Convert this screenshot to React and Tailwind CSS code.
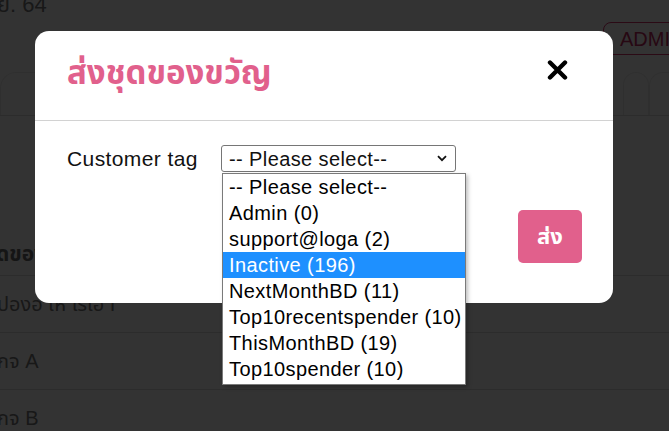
import React from 'react'

const tags = [
  '-- Please select--',
  'Admin (0)',
  'support@loga (2)',
  'Inactive (196)',
  'NextMonthBD (11)',
  'Top10recentspender (10)',
  'ThisMonthBD (19)',
  'Top10spender (10)',
]

function Chevron(){
  return (
    <svg width="10" height="7" viewBox="0 0 10 7" className="shrink-0">
      <polyline points="1,1.2 5,5.2 9,1.2" fill="none" stroke="#111" strokeWidth="1.8" />
    </svg>
  )
}

function CloseIcon(){
  return (
    <svg width="21" height="20" viewBox="0 0 21 20">
      <path d="M3 2.5 L18 17.5 M18 2.5 L3 17.5" stroke="#000" strokeWidth="4.4" strokeLinecap="round" />
    </svg>
  )
}

function BackPage(){
  return (
    <div className="w-[669px] h-[431px] bg-white text-[#777] overflow-hidden">
      <div className="h-[16px] overflow-hidden">
        <div className="-mt-[8px] -ml-[3px] text-[22px] leading-[26px]">ย. 64</div>
      </div>
      <div className="flex mt-[6px] h-[33px]">
        <div className="w-[603px] shrink-0"></div>
        <div className="shrink-0 h-[33px] border border-[#d6336c] rounded-[8px] px-[16px] flex items-center text-[20px] text-[#c22a5f]">ADMIN</div>
      </div>
      <div className="mt-[17px] h-[44px] flex border-b border-[#dcdcdc]">
        <div className="w-[36px] border-l border-t border-[#ececec] rounded-tl-[16px]"></div>
        <div className="flex-1 flex justify-end items-center pr-[46px] text-[20px]">ชื่อ</div>
        <div className="w-[26px] border border-b-0 border-[#ececec] rounded-t-[14px]"></div>
        <div className="w-[20px] border-l border-t border-[#ececec] rounded-tl-[14px]"></div>
      </div>
      <div className="h-[116px]"></div>
      <div className="h-[44px] flex items-center border-b border-[#dcdcdc] -ml-[4px] text-[21px] font-bold text-[#6a6a6a]">ดของขวัญทั้งหมด</div>
      <div className="h-[57px] flex items-center border-b border-[#dcdcdc] -ml-[3px] text-[20px]">ปองอ ให ไรเอ I</div>
      <div className="h-[57px] flex items-center border-b border-[#dcdcdc] -ml-[3px] text-[20px]">กจ A</div>
      <div className="h-[57px] flex items-center border-b border-[#dcdcdc] -ml-[3px] text-[20px]">กจ B</div>
    </div>
  )
}

export default function App(){
  return (
    <div className="relative w-[669px] h-[431px] overflow-hidden" style={{ fontFamily: '"Liberation Sans", "Noto Sans Thai", "Noto Sans", sans-serif' }}>
      <BackPage />
      <div className="absolute inset-0 bg-black/80 pl-[35px] pt-[31px]">
        <div className="w-[578px] bg-white rounded-[14px]">
          <div className="h-[90px] flex items-center justify-between pl-[32px] pr-[45px] pb-[12px] border-b border-[#d2d2d2]">
            <div className="text-[33px] leading-none font-bold text-[#e1608c] pt-[6px]">ส่งชุดของขวัญ</div>
            <CloseIcon />
          </div>
          <div className="pl-[32px] pr-[31px] pt-[24px] pb-[40px]">
            <div className="flex items-center h-[27px] leading-[27px] text-[20px] tracking-[0.4px] text-[#111]">
              <div className="w-[154px] shrink-0 text-[21px]">Customer tag</div>
              <div className="relative">
                <div className="w-[235px] h-[27px] border border-[#767676] rounded-[3px] flex items-center justify-between pl-[7px] pr-[8px] leading-none">
                  <span>-- Please select--</span>
                  <Chevron />
                </div>
                <div className="absolute top-[28px] left-[1px] w-[244px] bg-white border border-[#7a7a7a] pb-[2px] shadow-[2px_2px_4px_rgba(0,0,0,0.25)] z-10">
                  {tags.map((t, i) => (
                    <div key={t} className={'h-[26px] flex items-center pl-[6px] whitespace-nowrap ' + (i === 3 ? 'bg-[#1e90ff] text-white' : 'text-black')}>{t}</div>
                  ))}
                </div>
              </div>
            </div>
            <div className="flex justify-end mt-[38px]">
              <button className="w-[64px] h-[53px] rounded-[5px] bg-[#e1608c] text-white text-[22px] font-bold flex items-center justify-center">ส่ง</button>
            </div>
          </div>
        </div>
      </div>
    </div>
  )
}
